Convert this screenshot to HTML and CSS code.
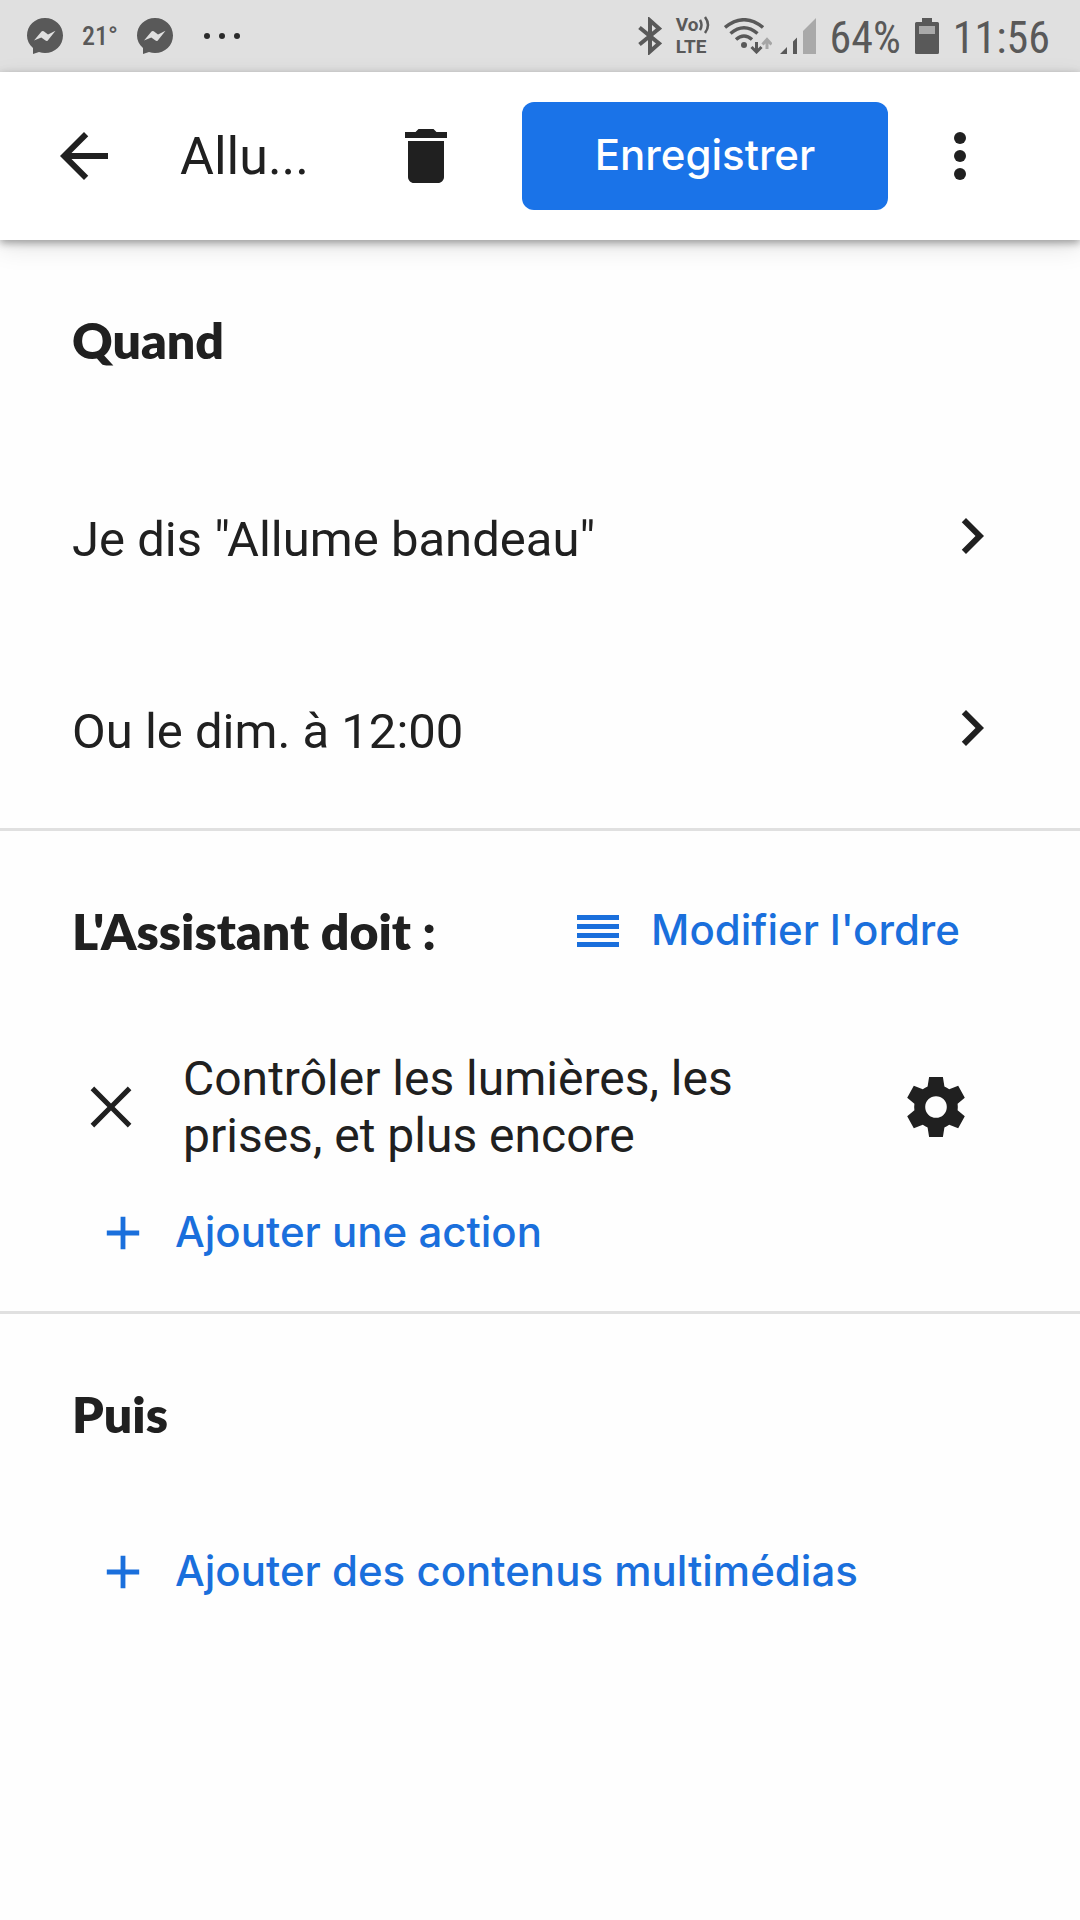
FILE: index.html
```html
<!DOCTYPE html>
<html lang="fr">
<head>
    <meta charset="UTF-8">
    <meta name="viewport" content="width=device-width, initial-scale=1.0">
    <title>Allume bandeau</title>
    <link rel="stylesheet" href="styles.css">
</head>
<body>

<div class="status-bar">
    <div class="status-left">
        <svg class="messenger" viewBox="0 0 36 36"><path fill="#595959" d="M18 0C8 0 0 7.500 0 17.500c0 5 2 9 6 12.500v6l6-2c2 .7 4 1 6 1 10 0 18-7.500 18-17.500S28 0 18 0z"/><path fill="#e0e0e0" d="M7 22.500 14.500 13.500q1-1 2.200-.2l4.300 3.200 7.500-3.800-7.700 9.700q-1 1.200-2.300.2l-4.200-3z"/></svg>
        <span class="temperature">21°</span>
        <svg class="messenger" viewBox="0 0 36 36"><path fill="#595959" d="M18 0C8 0 0 7.500 0 17.500c0 5 2 9 6 12.500v6l6-2c2 .7 4 1 6 1 10 0 18-7.500 18-17.500S28 0 18 0z"/><path fill="#e0e0e0" d="M7 22.500 14.500 13.500q1-1 2.200-.2l4.300 3.200 7.500-3.800-7.700 9.700q-1 1.200-2.300.2l-4.200-3z"/></svg>
        <svg class="more-notifs" viewBox="0 0 36 6" fill="#2b2b2b"><circle cx="3" cy="3" r="3"/><circle cx="18" cy="3" r="3"/><circle cx="33" cy="3" r="3"/></svg>
    </div>
    <div class="status-right">
        <svg class="bluetooth" viewBox="0 0 24 38" fill="none" stroke="#595959" stroke-width="4"><path d="M1.500 10.500 21 26.500 12 34.500V3.500l9 8L1.500 27.500"/></svg>
        <div class="volte">
            <span>Vo<svg class="waves" viewBox="0 0 11 18" fill="none" stroke="#595959" stroke-width="2.500"><path d="M1 4q3 5 0 10M6 1q6 8 0 16"/></svg></span>
            <span>LTE</span>
        </div>
        <svg class="wifi" viewBox="0 0 48 36" fill="none" stroke="#595959" stroke-width="3.500"><path d="M1 9.500q19-15.500 38 0M6.500 15.500q13.500-11.500 27 0M12 21.500q8-7 16 0"/><circle cx="20" cy="27" r="3" fill="#595959" stroke="none"/><path d="M32.500 24v9M27.500 29l5 5 5-5" stroke-width="3"/><path d="M43 31V22M38.500 26.500l4.500-5 4.500 5" stroke="#a6a6a6" stroke-width="3"/></svg>
        <svg class="signal" viewBox="0 0 36 36"><path fill="#595959" d="M0 36 7 29v7zM13 23.500l4-4V36h-4z"/><path fill="#a9a9a9" d="M23 13 36 0v36H23z"/></svg>
        <span class="status-text">64%</span>
        <svg class="battery" viewBox="0 0 24 36"><path fill="#595959" d="M7 0h10v4h5.500Q24 4 24 5.500v29q0 1.500-1.500 1.500h-21Q0 36 0 34.500v-29Q0 4 1.500 4H7z"/><path fill="#a9a9a9" d="M4 8h16v8H4z"/></svg>
        <span class="status-text">11:56</span>
    </div>
</div>

<header class="toolbar">
    <button class="icon-button" aria-label="Retour">
        <svg class="icon" viewBox="0 0 24 24"><path d="M20 11H7.830l5.590-5.590L12 4l-8 8 8 8 1.410-1.410L7.830 13H20z"/></svg>
    </button>
    <h1 class="title">Allu...</h1>
    <button class="icon-button" aria-label="Supprimer">
        <svg class="icon" viewBox="0 0 24 24"><path d="M6 19c0 1.100.9 2 2 2h8c1.100 0 2-.9 2-2V7H6zM19 4h-3.500l-1-1h-5l-1 1H5v2h14z"/></svg>
    </button>
    <button class="save-button">Enregistrer</button>
    <button class="icon-button more-button" aria-label="Plus d'options">
        <svg class="icon" viewBox="0 0 24 24"><circle cx="12" cy="6" r="2"/><circle cx="12" cy="12" r="2"/><circle cx="12" cy="18" r="2"/></svg>
    </button>
</header>

<main>
    <section class="section">
        <div class="section-header">
            <h2>Quand</h2>
        </div>
        <button class="starter-row">
            <span class="row-text">Je dis "Allume bandeau"</span>
            <svg class="icon" viewBox="0 0 24 24"><path d="M10 6 8.590 7.410 13.170 12l-4.580 4.590L10 18l6-6z"/></svg>
        </button>
        <button class="starter-row">
            <span class="row-text">Ou le dim. à 12:00</span>
            <svg class="icon" viewBox="0 0 24 24"><path d="M10 6 8.590 7.410 13.170 12l-4.580 4.590L10 18l6-6z"/></svg>
        </button>
    </section>

    <section class="section">
        <div class="section-header">
            <h2>L'Assistant doit :</h2>
            <button class="link-button order-button">
                <svg class="order-icon" viewBox="0 0 42 32"><path d="M0 0h42v5H0zM0 9h42v5H0zM0 18h42v5H0zM0 27h42v5H0z"/></svg>
                <span class="link-text">Modifier l'ordre</span>
            </button>
        </div>
        <div class="action-row">
            <button class="icon-button" aria-label="Retirer l'action">
                <svg class="icon" viewBox="0 0 24 24"><path d="M18.800 6.400 17.600 5.200 12 10.800 6.400 5.200 5.200 6.400 10.800 12l-5.600 5.600 1.200 1.200L12 13.200l5.600 5.600 1.200-1.200L13.200 12z"/></svg>
            </button>
            <p class="action-text">Contrôler les lumières, les prises, et plus encore</p>
            <button class="icon-button" aria-label="Paramètres de l'action">
                <svg class="icon" viewBox="0 0 24 24"><path fill-rule="evenodd" d="M9.700 2h4.600l.5 3.200q.8.300 1.600.9l3-1.200 2.200 4-2.400 2q.15 1.100 0 2.200l2.400 2-2.200 4-3-1.200q-.8.600-1.600.9L14.300 22H9.700l-.5-3.200q-.8-.3-1.600-.9l-3 1.200-2.200-4 2.400-2q-.15-1.100 0-2.200l-2.400-2 2.200-4 3 1.200q.8-.6 1.600-.9zM12 8.400a3.600 3.600 0 1 0 0 7.200 3.600 3.600 0 0 0 0-7.200z"/></svg>
            </button>
        </div>
        <button class="link-button add-button">
            <svg class="icon" viewBox="0 0 24 24"><path d="M11.200 6.600h1.600v4.600h4.600v1.600h-4.600v4.600h-1.600v-4.600H6.600v-1.600h4.600z"/></svg>
            <span class="link-text">Ajouter une action</span>
        </button>
    </section>

    <section class="section">
        <div class="section-header">
            <h2>Puis</h2>
        </div>
        <button class="link-button add-button media-button">
            <svg class="icon" viewBox="0 0 24 24"><path d="M11.200 6.600h1.600v4.600h4.600v1.600h-4.600v4.600h-1.600v-4.600H6.600v-1.600h4.600z"/></svg>
            <span class="link-text">Ajouter des contenus multimédias</span>
        </button>
    </section>
</main>

</body>
</html>
```
FILE: styles.css
```css
* {
    box-sizing: border-box;
}

body {
    font-family: Roboto, sans-serif;
    background-color: #fefefe;
    color: #202020;
    margin: 0;
    min-height: 100vh;
}

h1, h2, p {
    margin: 0;
}

button {
    border: none;
    background: none;
    padding: 0;
    color: inherit;
    font: inherit;
    cursor: pointer;
}

svg {
    display: block;
    flex-shrink: 0;
}

.icon {
    width: 72px;
    height: 72px;
    fill: currentColor;
}

.icon-button {
    flex-shrink: 0;
}

/* Status bar */
.status-bar {
    display: flex;
    justify-content: space-between;
    align-items: center;
    height: 72px;
    padding: 0 30px 0 27px;
    background-color: #e0e0e0;
    color: #595959;
    font-family: "Roboto Condensed", Roboto, sans-serif;
}

.status-left, .status-right {
    display: flex;
    align-items: center;
}

.status-left {
    gap: 19px;
}

.status-right {
    gap: 14px;
}

.messenger {
    width: 36px;
    height: 36px;
}

.temperature {
    font-size: 26px;
    font-weight: 500;
}

.more-notifs {
    width: 36px;
    height: 6px;
    margin-left: 12px;
}

.bluetooth {
    width: 24px;
    height: 38px;
}

.volte {
    display: flex;
    flex-direction: column;
    font-family: Roboto, sans-serif;
    font-size: 19px;
    font-weight: 700;
    line-height: 22px;
}

.volte span {
    display: flex;
    align-items: center;
}

.waves {
    width: 11px;
    height: 18px;
}

.wifi {
    width: 48px;
    height: 36px;
}

.signal {
    width: 36px;
    height: 36px;
    margin-left: -6px;
}

.battery {
    width: 24px;
    height: 36px;
}

.status-text {
    padding-top: 4px;
    font-size: 44px;
    line-height: 68px;
}

/* Toolbar */
.toolbar {
    display: flex;
    align-items: center;
    height: 168px;
    padding: 0 84px 0 48px;
    gap: 60px;
    background-color: #ffffff;
    box-shadow: 0 3px 8px rgba(0, 0, 0, 0.35), 0 8px 24px rgba(0, 0, 0, 0.1);
}

.title {
    flex: 1;
    min-width: 0;
    font-size: 52px;
    font-weight: 400;
    white-space: nowrap;
}

.save-button {
    width: 366px;
    height: 108px;
    padding-bottom: 4px;
    border-radius: 12px;
    background-color: #1a73e8;
    color: #ffffff;
    font-family: Inter, sans-serif;
    font-size: 42px;
    font-weight: 500;
}

.more-button {
    margin-left: -24px;
}

/* Sections */
.section {
    padding-bottom: 4px;
    border-bottom: 3px solid #e0e0e0;
}

.section + .section {
    padding-bottom: 28px;
}

.section:last-child {
    border-bottom: none;
}

.section-header {
    display: flex;
    justify-content: space-between;
    align-items: center;
    height: 200px;
    padding: 0 120px 0 72px;
}

h2 {
    font-family: Lato, sans-serif;
    font-size: 50px;
    font-weight: 800;
}

.starter-row {
    display: flex;
    justify-content: space-between;
    align-items: center;
    width: 100%;
    height: 192px;
    padding: 0 72px;
    text-align: left;
}

.row-text {
    padding-top: 6px;
    font-size: 49px;
}

.action-row {
    display: flex;
    align-items: center;
    padding: 19px 108px 19px 75px;
    gap: 36px;
}

.action-text {
    flex: 1;
    padding-right: 120px;
    font-size: 48px;
    line-height: 57px;
}

.link-button {
    display: flex;
    align-items: center;
    color: #1a6fdc;
    font-family: Inter, sans-serif;
    font-size: 42px;
    font-weight: 500;
}

.link-text {
    padding-bottom: 4px;
}

.order-button {
    gap: 32px;
}

.order-icon {
    width: 42px;
    height: 32px;
    fill: currentColor;
}

.add-button {
    height: 100px;
    margin-left: 87px;
    gap: 16px;
}

.media-button {
    margin-top: 8px;
}
```
